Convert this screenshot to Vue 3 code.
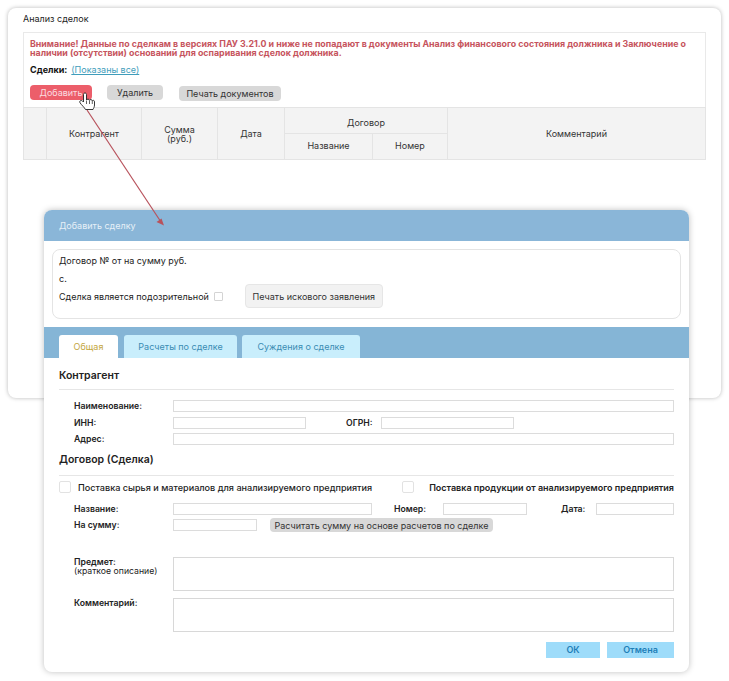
<template>
  <div class="page">
    <section class="card">
      <div class="card-title">Анализ сделок</div>
      <div class="panel">
        <div class="panel-top">
          <p class="warning">
            Внимание! Данные по сделкам в версиях ПАУ 3.21.0 и ниже не попадают в документы Анализ финансового состояния должника и Заключение о наличии (отсутствии) оснований для оспаривания сделок должника.
          </p>
          <div class="deals-line">
            <b>Сделки:</b>
            <a class="deals-link">(Показаны все)</a>
          </div>
          <div class="actions">
            <button class="btn btn-red">Добавить</button>
            <button class="btn btn-grey btn-delete">Удалить</button>
            <button class="btn btn-grey btn-print">Печать документов</button>
          </div>
        </div>
        <table class="deals">
          <colgroup>
            <col v-for="w in colWidths" :key="w.id" :style="{ width: w.px + 'px' }" />
          </colgroup>
          <tbody>
            <tr class="row-a">
              <th rowspan="2"></th>
              <th rowspan="2">Контрагент</th>
              <th rowspan="2" class="tight">Сумма<br />(руб.)</th>
              <th rowspan="2">Дата</th>
              <th colspan="2" class="group">Договор</th>
              <th rowspan="2">Комментарий</th>
            </tr>
            <tr class="row-b">
              <th>Название</th>
              <th>Номер</th>
            </tr>
          </tbody>
        </table>
      </div>
    </section>

    <section class="dialog">
      <header class="dialog-head">Добавить сделку</header>
      <div class="summary">
        <div class="summary-line">Договор № от на сумму руб.</div>
        <div class="summary-line second">с.</div>
        <div class="suspicious">
          <span>Сделка является подозрительной</span>
          <span class="check small"></span>
          <button class="claim-btn">Печать искового заявления</button>
        </div>
      </div>
      <nav class="tabs">
        <div class="tab active">Общая</div>
        <div class="tab calc">Расчеты по сделке</div>
        <div class="tab opinion">Суждения о сделке</div>
      </nav>
      <div class="form">
        <h3 class="section-title">Контрагент</h3>
        <div class="rows">
          <div class="row">
            <label class="lbl">Наименование:</label>
            <span class="field grow"></span>
          </div>
          <div class="row">
            <label class="lbl">ИНН:</label>
            <span class="field w-133"></span>
            <label class="lbl-inline ogrn">ОГРН:</label>
            <span class="field w-133"></span>
          </div>
          <div class="row">
            <label class="lbl">Адрес:</label>
            <span class="field grow"></span>
          </div>
        </div>

        <h3 class="section-title second-title">Договор (Сделка)</h3>
        <div class="supply">
          <span class="check"></span>
          <span class="supply-text first">Поставка сырья и материалов для анализируемого предприятия</span>
          <span class="check"></span>
          <span class="supply-text strong">Поставка продукции от анализируемого предприятия</span>
        </div>
        <div class="rows contract">
          <div class="row">
            <label class="lbl">Название:</label>
            <span class="field w-199"></span>
            <label class="lbl-inline nomer">Номер:</label>
            <span class="field w-84"></span>
            <label class="lbl-inline data">Дата:</label>
            <span class="field grow"></span>
          </div>
          <div class="row">
            <label class="lbl">На сумму:</label>
            <span class="field w-84"></span>
            <button class="calc-btn">Расчитать сумму на основе расчетов по сделке</button>
          </div>
        </div>
        <div class="area-row subject">
          <label class="lbl">Предмет:<small>(краткое описание)</small></label>
          <span class="area"></span>
        </div>
        <div class="area-row">
          <label class="lbl">Комментарий:</label>
          <span class="area"></span>
        </div>
        <div class="dialog-actions">
          <button class="blue-btn ok">ОК</button>
          <button class="blue-btn cancel">Отмена</button>
        </div>
      </div>
    </section>

    <svg class="overlay" width="729" height="681" viewBox="0 0 729 681">
      <line x1="87" y1="110" x2="161" y2="222" stroke="#b8525c" stroke-width="1.200" />
      <path d="M164 225.500 L156.500 222 L161.500 218.500 Z" fill="#b8525c" />
      <path
        d="M83.500 94.500 C83.500 92.500 86.500 92.500 86.500 94.500 L86.500 100 C87 98.800 89.200 98.800 89.500 100.300 C90 99.200 92 99.300 92.300 100.800 C92.800 100 94.500 100.200 94.500 101.800 L94.500 105 C94.500 107 93.600 108 93 109.500 L85.500 109.500 C84.500 107.500 81.500 105 80 102.800 C79 101 81 99.700 82.500 101 L83.500 102 Z"
        fill="#fff"
        stroke="#222"
        stroke-width="0.9"
        stroke-linejoin="round"
      />
      <path d="M86.500 100.500 V104 M89.500 100.500 V104 M92.300 101 V104" stroke="#222" stroke-width="0.7" fill="none" />
    </svg>
  </div>
</template>

<script setup>
const colWidths = [
  { id: 'mark', px: 23 },
  { id: 'party', px: 95 },
  { id: 'sum', px: 76 },
  { id: 'date', px: 67 },
  { id: 'name', px: 88 },
  { id: 'num', px: 75 },
  { id: 'comment', px: 258 },
]
</script>

<style>
html,
body {
  margin: 0;
  background: #fff;
}
</style>

<style scoped>
.page {
  position: relative;
  width: 729px;
  height: 681px;
  overflow: hidden;
  padding: 8px 8px 0;
  box-sizing: border-box;
  background: #fff;
  font-family: Inter, "Liberation Sans", sans-serif;
  font-size: 9px;
  color: #222;
}

.card {
  width: 713px;
  height: 390px;
  box-sizing: border-box;
  padding: 6px 15px 0;
  background: #fff;
  border-radius: 8px;
  box-shadow: 0 0 4px rgba(0, 0, 0, 0.28);
}

.card-title {
  height: 18px;
  line-height: 10px;
  font-size: 9px;
}

.panel {
  width: 683px;
}

.panel-top {
  height: 75px;
  box-sizing: border-box;
  padding: 6px 6px 0;
  border: 1px solid #e9e9e9;
  border-bottom: 0;
}

.warning {
  margin: 0;
  font-size: 8.850px;
  line-height: 9px;
  font-weight: 700;
  color: #c6545d;
}

.deals-line {
  margin-top: 7px;
  display: flex;
  gap: 4px;
  line-height: 12px;
  color: #111;
}

.deals-link {
  color: #3f9dbb;
  text-decoration: underline;
}

.actions {
  display: flex;
  align-items: flex-start;
  margin-top: 9px;
}

.btn {
  height: 15px;
  padding: 0;
  border: 0;
  border-radius: 4px;
  font: inherit;
  font-size: 9px;
}

.btn-red {
  width: 62px;
  background: #ec5e6a;
  color: #fbdde0;
}

.btn-grey {
  background: #d8d8d8;
  color: #333;
}

.btn-delete {
  width: 56px;
  margin-left: 15px;
}

.btn-print {
  width: 102px;
  margin-left: 16px;
  margin-top: 1px;
}

.deals {
  width: 683px;
  table-layout: fixed;
  border-collapse: collapse;
  background: #f3f3f3;
}

.deals th {
  border: 1px solid #e4e4e4;
  font-weight: 400;
  font-size: 9px;
  color: #333;
  padding: 0;
  text-align: center;
}

.deals .tight {
  line-height: 9px;
}

.deals .group {
  padding-top: 3px;
}

.deals .row-b th {
  padding-bottom: 3px;
}

.row-a {
  height: 26px;
}

.row-b {
  height: 26px;
}

.dialog {
  position: absolute;
  left: 44px;
  top: 210px;
  width: 645px;
  height: 462px;
  background: #fff;
  border-radius: 8px;
  box-shadow: 0 0 6px rgba(0, 0, 0, 0.25);
  overflow: hidden;
}

.dialog-head {
  height: 31px;
  box-sizing: border-box;
  padding: 10px 15px 0;
  line-height: 11px;
  font-size: 9px;
  background: #8ab6d8;
  color: #e6f0f7;
}

.summary {
  margin: 8px 8px 8px;
  height: 70px;
  box-sizing: border-box;
  padding: 5px 6px 0;
  border: 1px solid #e4e4e4;
  border-radius: 8px;
  line-height: 11px;
}

.summary-line.second {
  margin-top: 7px;
}

.suspicious {
  display: flex;
  align-items: center;
  height: 24px;
}

.check {
  display: block;
  flex: none;
  width: 12px;
  height: 12px;
  box-sizing: border-box;
  border: 1px solid #e2e2e2;
  border-radius: 2px;
  background: #fff;
}

.check.small {
  width: 9px;
  height: 9px;
  margin-left: 5px;
  border-color: #d4d4d4;
  border-radius: 1px;
}

.claim-btn {
  width: 138px;
  height: 24px;
  margin-left: 22px;
  padding: 0;
  border: 1px solid #e6e6e6;
  border-radius: 4px;
  background: #f2f2f2;
  font: inherit;
  color: #333;
}

.tabs {
  display: flex;
  align-items: flex-end;
  height: 31px;
  padding-left: 15px;
  background: #85b5d6;
}

.tab {
  height: 23px;
  box-sizing: border-box;
  padding-top: 7px;
  line-height: 9px;
  text-align: center;
  border-radius: 3px 3px 0 0;
  background: #c9eefc;
  color: #3a8cb3;
}

.tab.active {
  width: 59px;
  background: #fff;
  color: #c4a63f;
}

.tab.calc {
  width: 113px;
  margin-left: 6px;
}

.tab.opinion {
  width: 118px;
  margin-left: 5px;
}

.form {
  padding: 0 15px;
}

.section-title {
  margin: 0;
  box-sizing: border-box;
  padding-top: 12px;
  height: 32px;
  line-height: 12px;
  font-size: 10.500px;
  font-weight: 600;
  color: #222;
  border-bottom: 1px solid #e6e6e6;
}

.section-title.second-title {
  height: 26.500px;
  padding-top: 4.500px;
}

.rows {
  padding-top: 10px;
}

.row {
  display: flex;
  align-items: center;
  height: 12px;
  margin-bottom: 4.500px;
}

.lbl {
  flex: none;
  width: 99px;
  margin-left: 15px;
  font-size: 8.700px;
  font-weight: 600;
  color: #222;
}

.lbl small {
  display: block;
  font-size: 8.700px;
  font-weight: 400;
  line-height: 9px;
}

.lbl-inline {
  flex: none;
  font-size: 8.700px;
  font-weight: 600;
  color: #222;
}

.ogrn {
  width: 35px;
  margin-left: 40px;
}

.nomer {
  width: 49px;
  margin-left: 22px;
}

.data {
  width: 35px;
  margin-left: 34px;
}

.field {
  display: block;
  height: 12px;
  box-sizing: border-box;
  border: 1px solid #dcdcdc;
  background: #fff;
}

.grow {
  flex: 1;
}

.w-133 {
  width: 133px;
}

.w-199 {
  width: 199px;
}

.w-84 {
  width: 84px;
}

.supply {
  display: flex;
  align-items: center;
  height: 12px;
  margin-top: 5px;
}

.supply-text {
  font-size: 9.100px;
  font-weight: 500;
  white-space: nowrap;
  color: #222;
}

.supply-text.first {
  width: 325px;
  margin-left: 7px;
}

.supply-text.strong {
  margin-left: 15px;
  font-size: 9px;
  font-weight: 600;
}

.contract {
  padding-top: 9.500px;
}

.calc-btn {
  width: 223px;
  height: 14px;
  margin-left: 13px;
  padding: 0;
  border: 0;
  border-radius: 4px;
  background: #d8d8d8;
  font: inherit;
  font-size: 9px;
  color: #333;
  white-space: nowrap;
}

.area-row {
  display: flex;
  align-items: flex-start;
  margin-top: 7px;
}

.area-row.subject {
  margin-top: 25.500px;
}

.area-row .lbl {
  line-height: 9px;
  padding-top: 1px;
}

.area {
  flex: 1;
  display: block;
  height: 34px;
  box-sizing: border-box;
  border: 1px solid #d8d8d8;
}

.dialog-actions {
  display: flex;
  justify-content: flex-end;
  gap: 7px;
  margin-top: 10px;
}

.blue-btn {
  height: 16px;
  padding: 0;
  border: 0;
  background: #9edcfa;
  color: #1e7fb8;
  font: inherit;
  font-size: 9px;
  font-weight: 600;
}

.blue-btn.ok {
  width: 54px;
}

.blue-btn.cancel {
  width: 67px;
}

.overlay {
  position: absolute;
  left: 0;
  top: 0;
  pointer-events: none;
}
</style>
